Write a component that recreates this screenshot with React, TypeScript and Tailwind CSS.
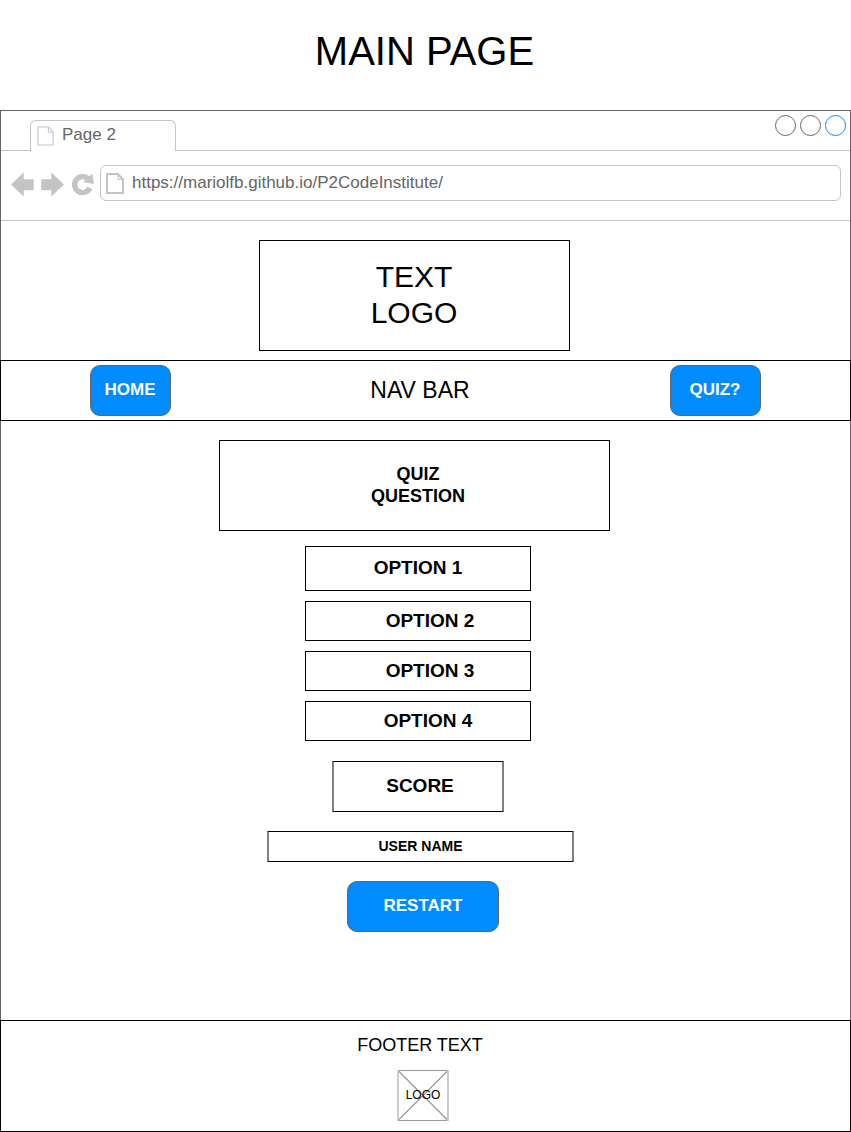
import type { ReactNode } from "react";

function PageIcon({ className, weight }: { className: string; weight: number }) {
  return (
    <svg className={className} viewBox="0 0 18 21" preserveAspectRatio="none" fill="none" stroke="#c4c4c4" strokeWidth={weight}>
      <path d="M1 1H12L17 6.5V20H1Z" />
      <path d="M12 1V6.5H17" strokeWidth="1" />
    </svg>
  );
}

function Tab() {
  return (
    <div className="flex h-10">
      <div className="w-[29px] border-b border-[#c4c4c4]" />
      <div className="mt-[9px] flex h-[31px] w-[146px] rounded-t-md border-x border-t border-[#c4c4c4] pl-1.5">
        <PageIcon className="mt-[5px] h-5 w-[17px] shrink-0" weight={1.2} />
        <span className="ml-2 mt-1 text-[17px] leading-5 text-[#666666]">Page 2</span>
      </div>
      <div className="flex flex-1 justify-end gap-1 border-b border-[#c4c4c4] pr-1 pt-1">
        <div className="size-[21px] rounded-full border border-[#666666]" />
        <div className="size-[21px] rounded-full border border-[#666666]" />
        <div className="size-[21px] rounded-full border border-[#008cff]" />
      </div>
    </div>
  );
}

function Toolbar() {
  return (
    <div className="flex h-[70px] border-b border-[#c4c4c4] pl-[9px] pt-3.5">
      <svg className="h-9 w-[90px] shrink-0" viewBox="10 165 90 36" fill="#c4c4c4">
        <path d="M11 184.5L23.7 172.5V179.3H33.7V190.2H23.7V196.5Z" />
        <path d="M64 184.5L51.3 172.5V179.3H41.3V190.2H51.3V196.5Z" />
        <path d="M89.9 188A8 8 0 1 1 88.4 179" fill="none" stroke="#c4c4c4" strokeWidth="5.4" />
        <path d="M92.3 173.8L93.9 184L83.2 182.3Z" />
      </svg>
      <div className="flex h-9 w-[741px] rounded-md border border-[#c4c4c4] pl-[5px] pt-[7px]">
        <PageIcon className="h-[21px] w-[18px] shrink-0" weight={2} />
        <span className="ml-2 h-5 text-[17px] leading-5 text-[#666666]">https://mariolfb.github.io/P2CodeInstitute/</span>
      </div>
    </div>
  );
}

function Box({ className, children }: { className: string; children: ReactNode }) {
  return <div className={`flex items-center justify-center border-black text-center font-bold ${className}`}>{children}</div>;
}

const button = "flex items-center justify-center rounded-[10px] border-[#666666] bg-[#008cff] pb-px text-[17px] font-bold text-white";

export default function App() {
  return (
    <div className="flex h-[1132px] w-[851px] flex-col whitespace-nowrap bg-white font-['Liberation_Sans',Arial,sans-serif] leading-[1.2] text-black">
      <h1 className="h-[110px] pr-[2px] pt-[27px] text-center text-[40px] leading-[48px]">MAIN PAGE</h1>

      <div className="h-[111px] border-x border-t border-[#666666]">
        <Tab />
        <Toolbar />
      </div>

      <div className="h-[139px] border-x border-[#666666] pl-[258px] pt-[19px]">
        <div className="flex h-[111px] w-[311px] items-center justify-center border border-black pb-px pr-px text-center text-[30px] leading-9">
          TEXT
          <br />
          LOGO
        </div>
      </div>

      <nav className="flex h-[61px] items-center justify-between border border-black px-[89px]">
        <button className={`${button} h-[51px] w-[81px] border pr-px`}>HOME</button>
        <span className="mr-px text-[23px]">NAV BAR</span>
        <button className={`${button} h-[51px] w-[91px] border pr-px`}>QUIZ?</button>
      </nav>

      <main className="flex h-[599px] flex-col items-start border-x border-[#666666] pt-[19px]">
        <Box className="ml-[218px] h-[91px] w-[391px] border pb-[2px] pl-[7px] text-[18px] leading-[22px]">
          QUIZ
          <br />
          QUESTION
        </Box>
        <Box className="ml-[304px] mt-[15px] h-[45px] w-[226px] border text-[19px]">OPTION 1</Box>
        <div className="ml-[304px] mt-2.5 flex flex-col gap-2.5 text-[19px]">
          <Box className="h-10 w-[226px] border pl-6 pt-px">OPTION 2</Box>
          <Box className="h-10 w-[226px] border pl-6 pt-px">OPTION 3</Box>
          <Box className="h-10 w-[226px] border pl-5 pt-px">OPTION 4</Box>
        </div>
        <Box className="ml-[331px] mt-5 h-[51px] w-[172px] border-x-2 border-y border-x-[#808080] pl-1 text-[19px]">SCORE</Box>
        <Box className="ml-[266px] mt-[19px] h-[31px] w-[307px] border-x-2 border-y border-x-[#808080] text-[14px]">USER NAME</Box>
        <button className={`${button} ml-[346px] mt-[19px] h-[51px] w-[152px] border`}>RESTART</button>
      </main>

      <footer className="h-[112px] border border-black pt-[13px]">
        <p className="w-[838px] text-center text-[18px] leading-[22px]">FOOTER TEXT</p>
        <div className="ml-[396px] mt-3.5 grid h-[51px] w-[52px] place-items-center">
          <svg className="col-start-1 row-start-1 h-[51px] w-[52px]" viewBox="0 0 52 51" fill="none" stroke="#999999">
            <path d="M0 .5H52M0 50.5H52" />
            <path d="M1 .5L51 50.5M51 .5L1 50.5" strokeWidth="1.2" />
            <path d="M1 0V51M51 0V51" stroke="#cccccc" strokeWidth="2" />
          </svg>
          <span className="col-start-1 row-start-1 text-[12px]">LOGO</span>
        </div>
      </footer>
    </div>
  );
}
